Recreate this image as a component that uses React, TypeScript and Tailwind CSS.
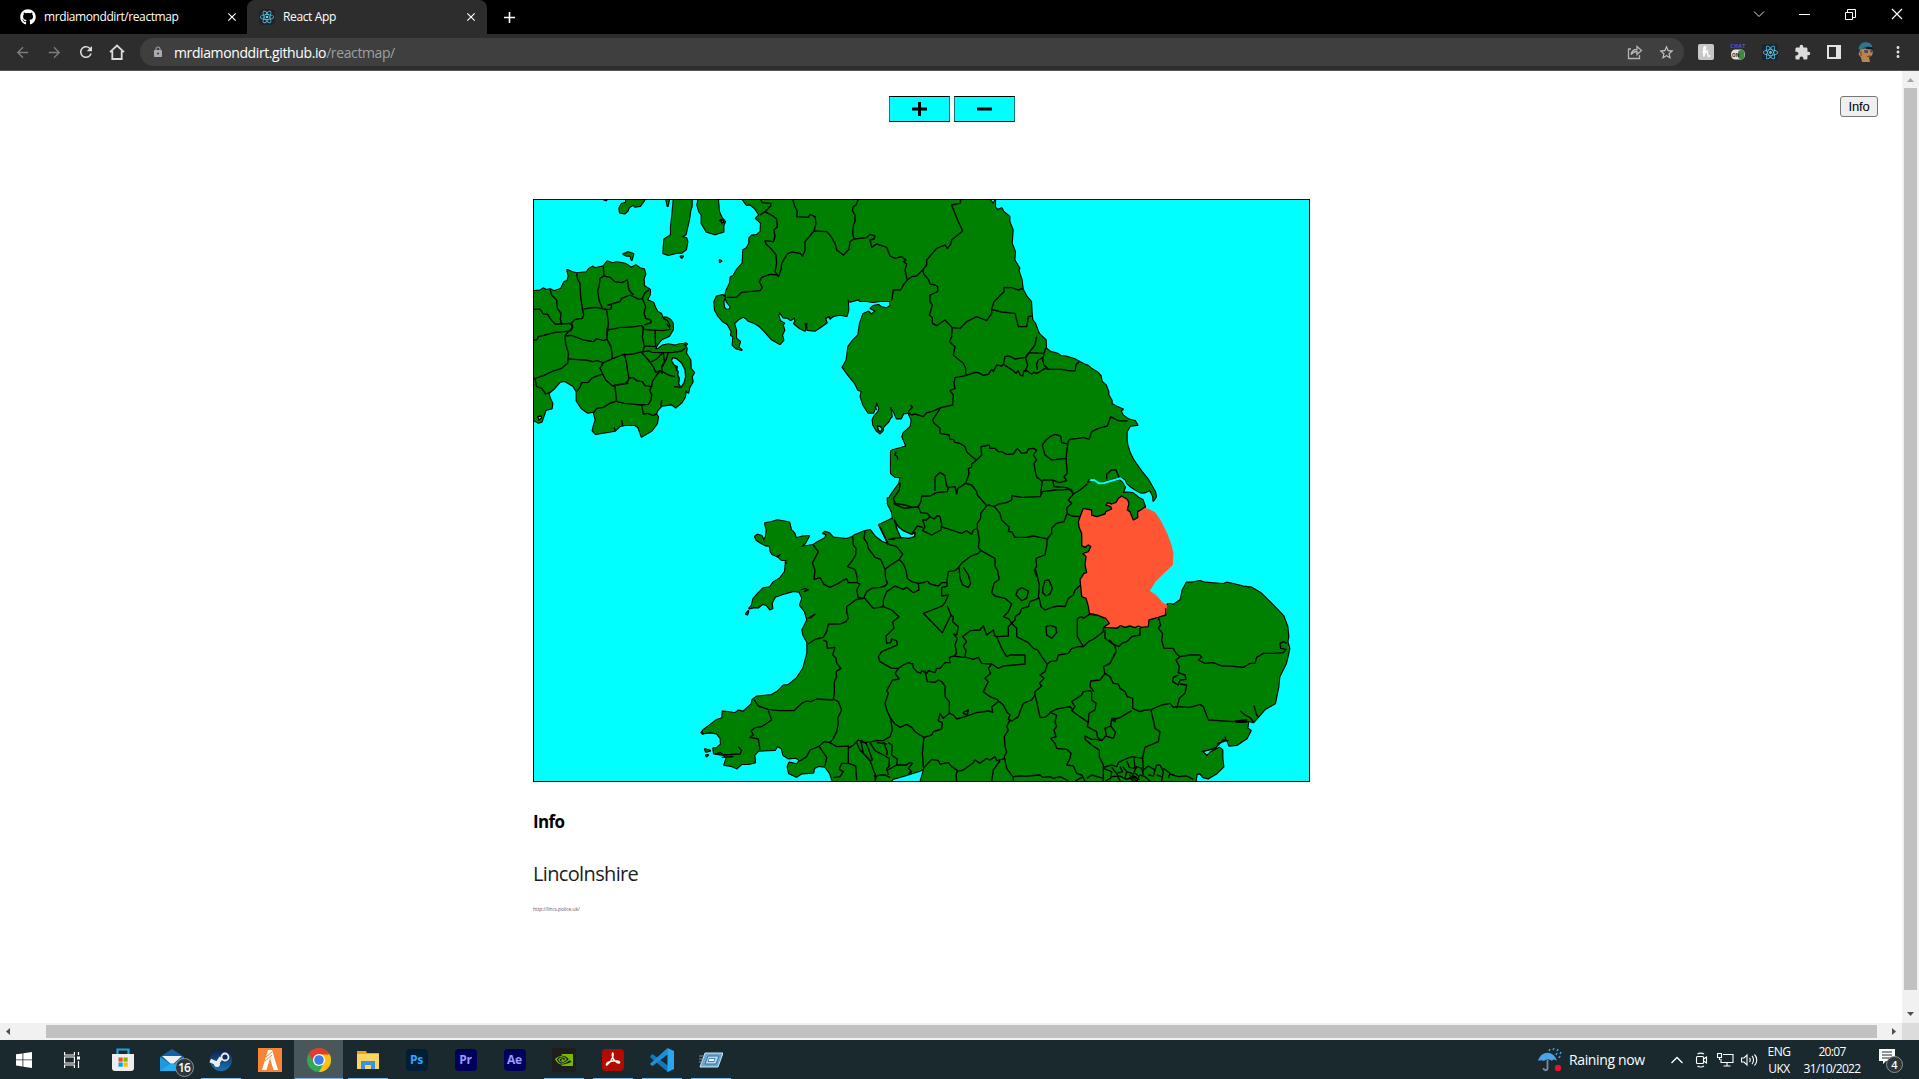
import React from "react";
import { FaGithub } from "react-icons/fa";
import { SiNvidia, SiReact } from "react-icons/si";
import { MdAdd, MdArrowBack, MdArrowForward, MdClose, MdExtension, MdLock, MdMoreVert, MdRefresh, MdStarBorder } from "react-icons/md";

type Sheet = { x: number; y: number; land: string[]; water?: string[]; coast: string[]; borders: string[] };

/* Each sheet is surveyed at three units per pixel from its own origin. */
const sheets: Sheet[] = [
  {
    x: 525, y: 190,
    land: [
      "M10,303L26,303 45,302 55,295 62,300 75,298 88,304 108,296 118,276 127,273 131,258 127,240 140,246 155,250 184,247 192,237 203,230 210,235 235,229 247,214 262,220 275,217 290,219 303,222 318,233 333,226 345,235 357,238 361,252 356,265 357,288 375,299 374,315 366,330 385,338 390,352 397,365 408,371 413,383 425,383 437,390 443,400 444,418 432,438 410,448 398,462 390,477 398,478 412,467 430,463 450,467 466,462 475,462 485,475 483,490 496,510 497,535 507,548 500,560 503,575 493,592 490,608 482,600 480,620 470,637 452,652 440,643 410,647 398,660 392,672 399,680 396,700 380,722 350,740 340,712 330,705 300,705 285,708 270,722 235,728 212,732 203,722 207,705 212,690 206,665 188,668 170,655 155,632 155,605 145,588 120,573 105,575 88,595 70,610 75,625 82,640 80,655 62,660 55,680 50,695 40,698 26,690 10,690Z",
      "M305,20L303,38 290,42 283,55 285,68 300,70 308,62 312,52 325,44 330,50 345,48 357,32 360,20Z",
      "M422,20L428,48 434,20Z",
      "M447,20L442,75 438,110 438,135 418,148 415,190 430,195 455,188 470,188 483,178 487,155 484,145 470,140 482,133 487,110 492,90 496,60 500,50 500,20Z",
      "M522,20L517,45 523,65 530,75 530,100 545,125 570,133 595,125 595,105 600,95 590,83 582,65 578,20Z",
      "M295,192L303,190 308,186 325,192 320,210 316,197 305,197Z",
      "M467,199L474,199 470,203Z", "M584,211L589,213 585,216Z", "M481,460L486,462 483,465Z", "M232,26L247,26 243,31Z",
    ],
    water: ["M443,503L455,506 469,518 480,538 482,560 477,579 468,592 461,582 463,565 458,555 460,545 455,540 457,530 448,526 439,512Z", "M38,680L48,678 50,684 42,690Z"],
    coast: ["M415,385L428,392 434,405 434,414 426,402"],
    borders: [
      "M75,298L80,315 95,330 97,355 108,370 106,388 110,402", "M26,358L45,357 55,372 68,373 75,385 90,402 110,402 135,400 143,410 138,422 125,424 90,427 60,435 40,440 35,450 26,450",
      "M155,250L158,268 165,280 167,320 172,355 176,375 172,385 150,388 140,398 143,412 120,436 122,460 130,490 128,520 110,535 80,545 60,555 26,567",
      "M176,357L200,353 215,352 240,358 258,358 260,342 248,345 285,335 290,325 315,315 342,328 352,325 360,308 372,300",
      "M235,229L237,258 225,265 222,290 218,300 222,330 232,355", "M237,258L255,262 270,275 290,278 307,270 312,300 325,315",
      "M240,355L246,365 250,400 246,440", "M246,420L270,416 285,412 305,412 330,410 350,406 356,418 385,420", "M352,325L362,350 357,370 362,385 378,390 378,398 358,405", "M358,418L410,422 437,418",
      "M356,410L352,440 358,470 352,488", "M390,420L392,470M358,468L390,470", "M120,438L140,436 175,450 205,455 215,446 235,452 246,448 258,470 262,500 258,510M246,415L246,450",
      "M128,507L150,508 180,510 205,515 215,512 235,518 258,508 290,495 325,492 352,485 375,483 380,487 415,488 445,487 470,483 480,475",
      "M235,518L225,535 232,550 242,570 262,587 300,580 308,575 312,563 308,545 305,520 298,490", "M350,487L370,510 385,530 392,547 405,542 412,550 410,530 418,515 415,487M412,490L395,507 375,517", "M430,487L425,505 412,530",
      "M312,565L325,563 335,572 352,575 360,587 380,590 382,575 395,555 405,543", "M412,545L430,555 450,560M447,590L468,592M452,530L455,540",
      "M230,553L210,560 200,565 190,577 170,578 165,592 155,605", "M262,587L270,590 275,633 255,640 235,652 215,655 206,668", "M275,585L310,580M275,635L300,640 330,643 350,645 370,643 378,630 380,615 374,600 380,590",
      "M350,645L355,672 368,670 385,677 397,670", "M30,565L35,590 50,595 62,612 75,607M410,630L408,647M290,690L293,708M268,712L270,722M583,90L592,98",
    ],
  },
  {
    x: 700, y: 190,
    land: [
      "M128,20L128,28 140,45 150,43 165,55 178,75 168,85 176,92 183,100 182,125 170,135 155,137 148,145 148,160 140,175 130,180 128,220 110,240 100,258 92,262 90,280 80,300 76,315 80,335 92,350 90,358 78,360 72,352 70,335 75,322 68,315 50,320 43,335 45,360 55,378 70,395 83,403 95,425 93,435 100,440 98,465 108,475 125,480 115,472 120,455 108,445 108,420 102,400 115,388 130,380 138,385 145,392 165,400 178,408 195,425 215,448 240,462 250,450 246,435 253,420 248,405 252,400 240,393 235,375 239,366 250,382 262,383 272,390 285,382 286,395 282,400 300,415 315,422 316,403 322,397 322,420 345,422 360,412 380,398 376,387 384,377 390,385 400,378 420,374 440,378 445,360 443,325 450,335 475,328 480,333 500,333 520,336 540,333 570,333 572,347 560,355 545,352 535,345 520,348 512,355 527,362 515,374 505,365 490,372 480,400 475,435 460,450 445,470 440,510 428,532 445,555 465,580 475,600 485,603 482,620 490,645 505,668 520,668 525,655 530,636 538,655 535,665 522,680 518,690 520,705 530,722 540,730 548,722 550,710 565,695 570,685 575,680 572,652 580,662 590,685 603,685 610,670 625,668 635,690 632,710 610,730 608,740 620,768 595,778 574,783 574,820 1020,820 1018,435 1005,400 997,390 995,370 993,335 980,320 968,298 965,270 955,240 958,235 943,210 945,185 935,160 938,120 928,95 928,80 910,65 905,55 893,60 885,52 885,32 880,42 868,28 868,20Z",
    ],
    water: ["M532,708L542,710 547,718 540,726 535,720Z", "M62,88L68,90 72,97 66,99Z"],
    coast: ["M632,645L637,652 625,665M572,652L575,665M376,385L388,380 392,388M525,650L530,660M315,400L320,415"],
    borders: [
      "M182,28L187,38 213,40 212,48 195,65 180,75", "M195,65L222,80 230,88 232,110 222,120 225,140 220,155 195,152 198,162 215,178 228,195 230,220 225,245 235,260 243,240 245,220 262,192 275,186 300,190 308,198 315,182 315,155 342,123 348,100 345,80 330,73 325,82 290,80 292,65 285,50 278,28",
      "M232,255L210,253 185,262 178,275 187,293 180,302 155,304 125,307 110,322 80,322",
      "M342,123L380,125 392,138 405,160 410,180 430,195 447,178 450,155 462,147 500,143 510,133 525,138 522,147 510,150 515,172 530,162 560,172 570,198 585,205 605,200 618,210 610,215 620,222 615,240 622,270 610,285 602,300 580,300 575,332",
      "M475,28L468,45 460,50 457,62 465,75 465,95 460,105 458,130 462,147", "M622,270L635,260 650,258 668,240 680,225 680,210 710,175 735,165 742,175 752,163 755,150 788,123 775,95 755,45 780,40 783,28",
      "M668,240L672,253 685,268 690,282 705,285 713,290 713,305 690,315 690,335 697,345 693,360 688,375 697,383 697,400 710,407 735,390 757,413 780,415 800,395 830,380 860,392 875,370 875,358 905,366 945,370 955,410 980,410 985,380 995,378",
      "M875,358L882,335 912,305 912,292 935,293 955,300 970,295", "M757,413L755,440 748,455 765,470 760,495 775,508 790,520 797,535 797,555",
    ],
  },
  {
    x: 840, y: 340,
    land: [
      "M585,-30L617,0 618,25 630,35 655,42 662,48 680,50 705,58 730,72 745,78 755,87 772,97 782,108 785,125 797,135 805,155 805,165 815,182 815,192 830,200 848,208 842,212 848,225 865,238 885,243 892,255 870,257 860,275 860,300 862,315 870,340 880,360 905,395 925,420 945,455 948,470 940,482 940,470 930,450 915,457 900,458 880,445 860,430 858,420 845,411 820,416 790,425 775,428 760,418 745,418 740,430 760,423 785,433 810,427 838,420 850,430 855,442 848,458 865,458 880,460 895,473 908,480 915,500 912,505 930,560 930,753 928,780 140,780 140,640 145,612 118,555 155,537 165,560 185,570 205,583 200,575 165,545 158,520 143,490 150,470 160,455 178,430 182,412 165,410 153,400 153,335 160,330 200,320 187,290 215,260 300,150Z",
    ],
    water: ["M163,540L175,560 190,572 215,583 225,577 224,590 205,595 182,592 172,570Z"],
    coast: [],
    borders: [
      "M377,107L405,97 415,98 430,106 445,103 455,88 460,95 470,75 485,78 490,73 505,82 520,92 528,100 535,92 540,105 548,108 552,92 560,92 575,103 582,97 590,100 600,95 615,85 625,88 665,88 685,92 705,93 708,75 717,65 710,72",
      "M490,73L495,50 508,48 525,57 555,52 567,38 585,15 590,-10", "M567,38L612,40 617,25M567,38L557,55 563,75 555,95M612,40L608,60 612,75 625,88M608,53L595,60 590,72 592,90",
      "M377,107L345,113 342,130 345,145 330,152 340,165 338,195 302,203 275,215 260,218 250,230 225,222 215,225 205,218", "M302,203L278,240 282,250 300,265 300,280 327,285 330,298 340,298 345,307 360,310 375,320 380,335 390,345 405,357 410,360 425,345 423,320 448,315 450,325 465,325 475,335 485,335 500,343 520,342 532,325 545,340 560,338 565,327 580,325 590,330 580,345 590,360 582,370 587,400 590,410 607,425 602,460",
      "M410,360L395,372 395,382 385,385 387,402 377,430 395,435 410,455 412,465 440,497", "M440,497L447,495 462,500 475,492 500,488 515,480 515,467 545,472 600,470 607,455 645,450 690,448 700,462",
      "M607,315L618,300 630,290 645,283 662,288 665,308 683,312 678,355 635,360 615,345Z", "M683,312L688,298 715,295 730,292 748,298 755,275 775,265 802,258 812,230 835,242 862,243", "M678,355L682,400 672,410 680,422 658,428 638,420 642,440 680,443 695,450 700,462 720,450 742,432M607,420L638,420",
      "M800,418L800,402 815,390 828,390 837,412", "M700,462L685,480 695,490 680,505 683,522 695,528 718,530",
      "M683,515L672,545 650,550 635,565 635,580 622,597 620,618 615,645 588,655 590,680 583,690 590,710", "M622,597L600,592 580,588 560,592 525,592 515,575 505,575 508,562 485,540 480,520 465,502",
      "M440,497L422,520 422,535 412,550 412,565 400,570 395,583 380,572 365,580 340,572 303,560", "M377,430L353,445 350,462 345,440 325,442 322,455 290,458 270,468 245,468 243,485 235,500 220,503 195,495 165,490 160,475 178,450 180,428",
      "M160,490L180,500 195,505 235,500 242,518 262,520 270,530 260,540 248,540 255,560 248,572 275,585 303,570 305,552 300,530 292,527 282,537 270,530M248,562L232,558 215,582",
      "M285,452L285,412 300,397 315,407 318,430 325,450", "M412,565L418,600 415,622 423,632", "M357,682L360,715 368,735 385,742 392,730 385,705 370,682",
      "M423,632L465,655 465,680 472,690 478,718", "M168,335L165,345 172,350 173,358", "M145,598L165,597M120,560L145,612",
    ],
  },
  {
    x: 690, y: 500,
    land: [
      "M593,-5L595,15 605,30 610,65 622,92 645,105 675,103 670,115 640,112 625,88 608,57 590,65 568,75 580,100 590,118 592,132 575,125 555,110 540,90 520,95 495,105 485,112 470,117 430,113 418,100 405,95 400,100 410,103 405,115 385,125 370,135 350,138 330,140 318,150 300,165 288,185 285,215 270,235 250,247 240,262 220,265 205,280 190,297 185,318 178,325 190,322 205,322 218,312 230,315 240,328 247,325 245,310 255,290 285,280 310,273 328,275 337,295 330,315 345,335 352,360 337,390 340,405 352,427 352,460 340,505 320,535 295,555 280,557 262,575 245,585 200,590 187,600 185,612 160,635 145,632 135,640 115,636 98,635 97,655 80,660 60,675 40,690 38,700 60,697 80,700 92,715 93,733 80,745 70,745 72,760 100,765 110,773 103,795 125,798 140,805 155,792 175,792 195,787 193,765 205,752 255,750 262,738 275,745 280,765 295,775 318,773 330,782 320,793 298,788 293,800 297,820 320,830 335,820 370,818 372,805 385,798 405,800 420,820 430,850 600,850 608,837 640,828 690,812 703,805 690,850 920,850 920,-5Z",
      "M225,70L245,66 262,61 280,64 298,68 303,90 313,100 318,115 335,110 357,108 345,130 318,150 300,168 290,180 275,180 265,170 248,163 242,155 240,138 228,135 222,120 228,110 230,90Z", "M195,110L203,104 215,108 220,120 230,137 215,130 200,120Z", "M168,342L175,333 172,343Z", "M45,748L60,752 48,755Z", "M48,766L54,765 50,769Z",
    ],
    water: [],
    coast: ["M332,270L345,265 355,270 342,275M353,355L375,343 360,355M75,762L92,758 100,765 150,762 155,752 145,740M95,772L130,770M262,170L272,163M605,115L640,113M38,690L33,698 40,703M285,185L290,192M398,98L404,103"],
    borders: [
      "M370,135L385,155 367,190 375,210 372,238 390,233 402,253 420,262 445,250 460,240 470,237 475,248 500,248 510,252 500,270 505,293 522,295",
      "M488,108L490,135 498,145 497,165 485,185 472,200 495,208 500,225 503,245", "M525,93L522,115 532,130 535,145 555,172 572,178 585,208 587,235 592,250 585,258 570,262 545,265 530,275 522,292 535,308 550,325 580,320 605,330 627,350 608,365 612,385 588,408 590,430 602,428 605,417 620,422 622,435 610,440 575,455 565,470 570,485 605,505 625,505 640,495 655,488 668,492 670,503 680,515 692,520 695,512 710,520 715,512 735,518 740,505 750,505 765,488 780,488 778,472 792,468",
      "M592,132L620,140 638,162 628,178 605,193 585,208", "M628,178L640,192 648,210 652,235 665,245 685,250 687,270 670,278 650,262 640,268 615,258 590,275 580,300 580,320", "M685,250L700,248 712,243 720,252 745,258 755,248 770,248 775,215 795,212 805,203 815,190 840,170 865,160 872,152",
      "M770,245L772,258 755,263 755,288 775,285 765,308 757,318 700,340 757,398 783,345 772,318",
      "M522,295L500,298 490,305 470,320 470,335 475,355 468,365 450,372 415,372 410,395 400,412 375,418 355,432", "M400,420L410,425 412,445 435,442 428,465 438,475 440,490 453,505 438,515 440,530 433,545 433,580 430,597 445,605 455,630 443,655 445,670 440,695 430,715 420,728 402,725 385,740 360,750 350,770 330,783",
      "M193,600L205,618 235,628 265,632 312,632 335,610 350,603 362,605 380,597 430,600", "M235,632L245,660 215,680 195,683 183,692 190,705 180,712 205,717 210,750", "M420,728L440,740 475,738 475,790 455,790 448,808 460,815 450,830 430,833",
      "M475,745L490,735 505,720 520,728 545,725 560,722 580,722 600,710 607,690 602,655 592,635 585,610 595,580 590,572 608,540 628,537 615,520 625,505", "M388,740L410,772 405,798M475,790L497,798 500,840M500,728L510,750 540,780 550,810 558,828 555,843M512,720L528,730 535,745 547,780 540,783 520,760 512,720",
      "M540,728L555,752 580,765 598,775 597,800 590,805 595,825M580,725L592,755 590,765M595,728L606,735 605,765 622,778 620,795M560,728L590,732", "M590,812L620,795 650,795 658,788 668,790 655,805 665,815 655,822M553,832L568,825 585,825 600,832M552,825L558,838",
      "M602,655L615,672 630,682 650,673 665,682 675,695 690,705 702,712 697,760 698,770 700,800", "M705,512L712,545 735,547 745,540 755,545 765,558 765,590 778,605 778,640 760,655 750,640 745,663 757,668 755,687 730,695 725,705 702,712", "M778,640L790,645 800,657",
      "M700,805L725,778 745,782 750,792 775,788 785,800 803,812 798,825 800,843",
    ],
  },
  {
    x: 940, y: 520,
    land: ["M-10,-10L600,-10 600,265 660,268 678,262 683,253 692,252 700,255 722,240 728,210 740,188 755,188 780,183 795,188 850,192 860,188 880,192 910,200 935,203 960,218 975,232 1005,262 1030,288 1042,320 1045,350 1042,365 1048,385 1045,400 1038,430 1028,450 1018,470 1015,500 1005,550 975,567 955,590 940,607 925,602 922,625 932,632 920,655 890,675 868,677 862,662 850,656 840,668 828,680 800,690 785,693 800,708 815,695 838,683 847,690 847,715 850,740 830,760 805,775 790,772 780,760 770,762 765,795 -10,795Z"],
    water: ["M885,603L920,600 918,607 890,607Z"],
    coast: ["M900,572L915,585 930,593 940,605M942,557L950,585 955,590M880,605L928,605M785,695L830,685M830,672L858,662 855,650M845,660L866,662M795,700L802,708"],
    borders: [
      "M178,178L162,190 155,218 165,228 195,235 215,252 205,275 190,290 207,297 215,310", "M285,145L290,160 298,195 295,235 270,245 265,260 245,265 240,280 225,290 225,300 215,310", "M297,232L303,260 315,270 335,262 355,258 375,260 385,235 400,225 405,210 422,195",
      "M228,225L232,212 245,203 265,213 260,235 245,242Z", "M308,205L315,182 327,180 337,205 330,222 318,228 308,218Z", "M318,320L330,316 348,322 350,338 335,355 320,345Z",
      "M215,310L230,325 230,350 265,368 280,385 293,390 305,410 322,433", "M215,310L205,320 205,348 175,350 165,348 160,330 140,345 130,317 120,330 90,332 68,350 80,365 70,378 78,392 75,410",
      "M170,350L185,385 200,410 210,405 255,405 255,432 225,435 190,438 175,445 155,432 125,430 115,412 100,418 80,412 68,412 42,408M33,287L40,290 38,305 55,320 50,345 40,342 52,355 45,375 50,400 42,408",
      "M322,433L330,425 350,422 355,405 385,400 395,385 415,380 430,380 445,365 460,358 490,335 490,325 508,310", "M412,295L412,350 430,380M412,295L425,290 430,295 448,283 470,285 495,295", "M495,328L495,355 515,370 537,380 545,370 560,365 575,350 600,345 600,320",
      "M507,358L525,378 528,395 510,430 490,440 495,460", "M655,292L662,315 655,325 668,340 665,360 672,385 700,385 708,400 720,410 750,405 780,405 785,412 775,420 795,430 820,428 845,438 870,438 910,442 930,430 945,430 950,412 970,400 1000,400 1030,398 1038,388 1022,385 1020,370 1030,365 1040,370",
      "M720,410L708,420 718,440 715,458 735,465 738,478 720,480 715,495 698,485 700,472 715,465M720,492L740,495 735,520 718,535 710,565", "M712,560L700,562 690,550 665,555 635,568 615,570 600,575 578,565 578,535 562,530 555,515 540,505 535,492 520,490 510,470 495,460 480,480 452,483 450,500 462,515",
      "M322,433L315,455 300,465 312,475 298,490 305,498 285,515 285,525 290,545 300,592 315,592 330,580", "M452,512L430,515 425,525 395,545 405,560 395,572 420,590 445,607 447,580 465,570 468,550 455,540 455,515Z",
      "M400,572L390,560 350,567 330,577 350,585 345,605 350,620 342,630 348,650 332,655 345,670 350,685 380,688 393,700 390,715 380,735 400,738 410,760 425,765 435,783",
      "M445,605L442,620 470,635 472,650 485,662 470,658 455,658 435,648 435,658 455,675 470,685 478,690 478,710 490,735 490,783", "M485,662L497,648 520,655 527,637 512,618 495,625 500,650M512,618L515,595 527,595 525,605 515,600 540,593 575,572",
      "M632,568L640,600 645,625 660,635 655,665 615,682 608,712 610,755", "M490,742L515,735 530,740 535,728 550,720 575,710 608,715", "M712,560L750,562 780,553 790,560 805,600 880,605",
      "M155,432L145,445 152,460 135,475 145,485 130,515 150,530 170,538 190,555 200,575 210,585 205,598 215,603 235,590 240,575 250,550 275,540 285,525", "M175,545L155,560 158,577 145,573 110,578 75,590 50,597",
      "M210,600L200,620 205,630 193,650 195,680 200,695 193,710 200,745 218,770M50,755L70,750 100,728 105,720 120,730 140,715 150,720 165,710 170,722 195,715M180,722L160,750 155,783",
      "M220,783L220,770 240,768 260,768 300,765 308,772 330,770 340,775 360,770 385,782M405,783L430,770M440,775L455,765 490,775",
      "M490,745L515,755 512,775 495,783M515,742L530,760 548,755 540,740M530,760L540,783M548,740L560,755 555,775M560,722L568,742 585,745 582,715M560,755L580,762 590,740 605,745 610,765M515,770L540,768 560,778 580,770 600,780M568,765L590,783 600,765 615,770 630,783M610,750L625,738 645,750 640,768 625,765M645,750L650,735 660,735 670,755 665,783M670,745L690,760 685,775M690,762L715,770 740,768 760,778M575,765L590,772M585,760L598,770M570,775L582,782M650,765L665,770",
      "M70,577L85,570 82,583 72,582Z",
    ],
  },
];

/* Lincolnshire, the selected county, drawn on the third sheet's grid. */
const selected = {
  fill: "M730,505L755,510 755,525 770,530 795,522 797,515 815,507 812,500 797,495 803,488 815,492 828,487 835,475 845,468 862,478 867,490 862,510 870,515 880,540 893,533 893,515 905,508 912,505 925,508 945,518 960,540 980,580 993,615 999,640 997,675 965,705 945,725 928,753 950,768 968,790 980,795 977,825 955,832 927,840 925,860 905,862 870,858 830,860 795,862 805,850 795,835 770,825 748,820 745,800 738,775 725,770 722,740 720,720 732,700 740,698 735,645 727,638 745,635 752,622 748,617 735,620 725,617 725,580 720,560 715,545 722,525Z",
  edge: "M977,805L977,825 955,832 927,840 925,860M925,860L905,862 895,858 885,863 870,858 855,862 842,857 830,865 795,862 793,860 808,850 797,835 770,825 748,820 745,800 738,775 725,770 722,740 720,718 732,700 740,698 735,675 738,650 728,640 745,635 752,620 745,615 735,622 725,617 725,580 717,562 715,545 722,525 730,505 755,510 755,525 770,530 795,522 797,515 815,507 812,500 797,495 803,488 815,492 828,487 835,475 845,468 862,478 867,490 862,510 870,515 880,540 893,533 893,515 905,508 915,500",
};

const at = (s: { x: number; y: number }) => `translate(${s.x} ${s.y}) scale(.333333)`;

function CountyMap() {
  return (
    <svg viewBox="534 200 775 581" className="h-[583px] w-[777px] border border-black bg-[#00ffff]" strokeLinejoin="round">
      {/* Coast outline first, then the land over its inner half. */}
      <g fill="#000" stroke="#000" strokeWidth="6.500">
        {sheets.map((s, i) => <g key={i} transform={at(s)}>{s.land.map((d, j) => <path key={j} d={d} />)}</g>)}
      </g>
      <g fill="#008000">
        {sheets.map((s, i) => <g key={i} transform={at(s)}>{s.land.map((d, j) => <path key={j} d={d} />)}</g>)}
      </g>
      {/* The Wash and the North Sea off Lincolnshire have no coast outline. */}
      <g fill="#00ffff">
        <path transform={at(sheets[4])} d="M600,-30L655,-15 662,5 680,40 720,60 720,140 665,180 652,205 650,222 668,245 678,258 640,260 600,200Z" />
        <path transform={at(sheets[2])} d="M919,503L945,516 960,540 1000,600 1000,490 960,488 940,492Z" />
      </g>
      {sheets.map((s, i) => (
        <g key={i} transform={at(s)} stroke="#000" strokeWidth="4">
          <g fill="#00ffff">{s.water?.map((d, j) => <path key={j} d={d} />)}</g>
          <g fill="none">{[...s.borders, ...s.coast].map((d, j) => <path key={j} d={d} />)}</g>
        </g>
      ))}
      <g transform={at(sheets[2])}>
        {/* Humber */}
        <path d="M750,421L762,420 778,430 792,429 820,421 842,415 851,423 858,436 870,447 885,456 905,466" fill="none" stroke="#00ffff" strokeWidth="6" />
        <path d={selected.fill} fill="#ff5533" stroke="#ff5533" strokeWidth="3" />
        <path d={selected.edge} fill="none" stroke="#000" strokeWidth="4" />
      </g>
    </svg>
  );
}

function Tabs() {
  return (
    <div className="flex h-[34px] items-start justify-between bg-black text-white">
      <div className="flex h-[34px] items-center text-[12px]">
        <div className="flex h-full w-[247px] items-center pl-[20px]">
          <FaGithub size={16} />
          <span className="ml-2 w-[181px] tracking-[-0.41px]">mrdiamonddirt/reactmap</span>
          <MdClose size={14} />
        </div>
        <div className="flex h-full w-[240px] items-center rounded-t-lg bg-[#2d2d2d] pl-[12px]">
          <span className="grid size-4 place-items-center rounded-sm bg-[#20232a]"><SiReact size={14} className="text-[#61dafb]" /></span>
          <span className="ml-2 w-[181px] tracking-[-0.36px]">React App</span>
          <MdClose size={14} />
        </div>
        <MdAdd size={19} className="ml-[13px]" />
      </div>
      <div className="flex h-[28px] items-center">
        <svg className="mr-[34px] size-[12px]" viewBox="0 0 12 12" fill="none" stroke="#ddd"><path d="M1 3.500l5 5 5-5" /></svg>
        <svg className="mr-[35px] size-[11px]" viewBox="0 0 11 11" stroke="white"><path d="M0 5.500h11" /></svg>
        <svg className="mr-[35px] size-[11px]" viewBox="0 0 11 11" fill="none" stroke="white"><path d="M.5 3.500h7v7h-7zM2.500 3V.5h8v8H8" /></svg>
        <svg className="mr-[16px] size-[12px]" viewBox="0 0 12 12" stroke="white" strokeWidth="1.200"><path d="M1 1l10 10M11 1L1 11" /></svg>
      </div>
    </div>
  );
}

function Toolbar() {
  return (
    <div className="flex h-[37px] shrink-0 items-center border-b border-[#555354] bg-[#2d2d2d] text-[#dcdcdc]">
      <div className="flex w-[140px] shrink-0 items-center gap-[15px] pl-[14px]">
        <MdArrowBack size={17} className="shrink-0 text-[#7d7d7d]" />
        <MdArrowForward size={17} className="shrink-0 text-[#7d7d7d]" />
        <MdRefresh size={18} className="-mx-px shrink-0" />
        <svg className="size-4 shrink-0" viewBox="0 0 16 16" fill="none" stroke="currentColor" strokeWidth="1.800"><path d="M1 8.200L8 1.500l7 6.700M3.300 7v8h9.400V7" /></svg>
      </div>
      <div className="flex h-[28px] w-[1544px] shrink-0 items-center rounded-full bg-[#3f3f3f] pr-[9px] pl-[12px]">
        <MdLock size={12} className="text-[#a8abb0]" />
        <span className="ml-[10px] flex-1 text-[14px] tracking-[-0.39px] text-white">mrdiamonddirt.github.io<span className="text-[#9aa0a6]">/reactmap/</span></span>
        <svg className="mr-[15px] size-4" viewBox="0 0 16 16" fill="none" stroke="#b5b5b5" strokeWidth="1.300"><path d="M4 5H1.500v9.500h11V11M4 10.500c.5-3.500 3-5 6-5V2.500l4.500 4-4.500 4v-3c-3 0-4.500 1-6 3z" /></svg>
        <MdStarBorder size={17} className="text-[#c4c4c4]" />
      </div>
      <div className="ml-[14px] flex items-center gap-4">
        <svg className="size-4" viewBox="0 0 16 16"><rect width="16" height="16" rx="2" fill="#c6c6c6" /><path d="M5 8c2-1 3.500-5 2-5.500S5.500 6 5.800 12.500C6.500 9 8.500 7 9.300 8s0 4.500 1.200 4.500S12 12 12 11M4 8.500l6-2" fill="none" stroke="white" strokeWidth="1.300" /></svg>
        <span className="flex size-4 flex-col items-center justify-center">
          <span className="text-[5px] leading-[5px] font-bold tracking-[0.5px] text-[#6a4fd0]">CHAT</span>
          <svg className="h-[12px] w-[16px]" viewBox="0 0 16 12"><rect x=".5" y=".5" width="15" height="11" rx="4.500" fill="#e2e2e2" /><rect x="8" y="1" width="7" height="10" rx="3.500" fill="#3d8b40" /><text x="1.500" y="8.200" fontSize="5" fontWeight="700" fill="#222">ON</text></svg>
        </span>
        <span className="grid size-4 place-items-center bg-[#20232a]"><SiReact size={15} className="text-[#5ad3f5]" /></span>
        <MdExtension size={17} className="-mx-[0.5px]" />
        <svg className="size-4" viewBox="0 0 16 16"><path fill="#e2e2e2" fillRule="evenodd" d="M1 1h14v14H1zM3 3h7v10H3z" /></svg>
        <svg className="h-5 w-4" viewBox="0 0 16 20"><path d="M2.500 7l10.500-1 2 5-1.500 3-2.500 1 1 5H4l-1-4.500-2.500-3z" fill="#b98352" /><path d="M.5 7C1.500 1 6-.5 10 .5c3 .8 4.500 3 4.500 5l-7-.5-5 3z" fill="#2c7593" /><path d="M9 4.500l6 1-.5 2L8 7z" fill="#12181f" /><path d="M6 8h4v3H6.500zM12 8h3l-.7 2.500h-2z" fill="#4b4f58" /><path d="M9 14.500l4-.5M3 9v5" stroke="#6b4024" /></svg>
        <MdMoreVert size={18} className="-mx-px" />
      </div>
    </div>
  );
}

function ZoomButton({ sign }: { sign: "plus" | "minus" }) {
  return (
    <button className="grid h-[26px] w-[61px] place-items-center border border-black border-x-[#1a7777] bg-[#00ffff]">
      <svg className="h-[14px] w-[15px]" viewBox="0 0 15 14"><path d="M0 5.500h15v3H0z" />{sign === "plus" && <path d="M6 0h3v14H6z" />}</svg>
    </button>
  );
}

function Page() {
  return (
    <div className="flex h-[969px] shrink-0 bg-white text-black">
      <div className="flex w-[1902px] flex-col">
        <main className="flex h-[952px] flex-col">
          <div className="flex h-[128px] justify-between pt-[25px]">
            <div className="w-[889px]" />
            <div className="flex gap-[4px]"><ZoomButton sign="plus" /><ZoomButton sign="minus" /></div>
            <div className="flex w-[887px] justify-end pr-[24px]">
              <button className="h-[21px] w-[38px] rounded-[3px] border border-[#767676] bg-[#efefef] font-['Liberation_Sans'] text-[13px] leading-[19px] tracking-[-0.2px]">Info</button>
            </div>
          </div>
          <div className="flex flex-col pl-[533px]">
            <CountyMap />
            <h3 className="mt-[28px] text-[17px] leading-[24px] font-bold tracking-[-0.6px]">Info</h3>
            <p className="mt-[26px] text-[20px] leading-[28px] tracking-[-0.65px] text-[#1c1c1c]">Lincolnshire</p>
            <a className="mt-[17px] text-[5px] leading-[8px] tracking-[-0.1px] text-[#6b5470]">http://lincs.police.uk/</a>
          </div>
        </main>
        <div className="flex h-[17px] items-center justify-between bg-[#f1f1f1] pr-[6px] pl-[6px]">
          <svg className="h-[7px] w-[4px]" viewBox="0 0 4 7"><path d="M4 0v7L0 3.500z" fill="#505050" /></svg>
          <div className="ml-[36px] h-[13px] w-[1831px] bg-[#c1c1c1]" />
          <svg className="ml-auto h-[7px] w-[4px]" viewBox="0 0 4 7"><path d="M0 0v7l4-3.500z" fill="#505050" /></svg>
        </div>
      </div>
      <div className="flex w-[17px] flex-col items-center bg-[#f1f1f1] pt-[7px]">
        <svg className="h-[4px] w-[7px]" viewBox="0 0 7 4"><path d="M0 4h7L3.500 0z" fill="#a3a3a3" /></svg>
        <div className="mt-[6px] h-[902px] w-[13px] bg-[#c1c1c1]" />
        <svg className="mt-[22px] h-[4px] w-[7px] shrink-0" viewBox="0 0 7 4"><path d="M0 0h7L3.500 4z" fill="#505050" /></svg>
        <div className="mt-auto h-[17px] w-[17px] bg-[#dcdcdc]" />
      </div>
    </div>
  );
}

function Slot({ children, open, active }: { children: React.ReactNode; open?: boolean; active?: boolean }) {
  return (
    <div className={`flex h-full w-[49px] flex-col items-center ${active ? "bg-[#4a575a]" : ""}`}>
      <div className="flex h-[38px] items-center pt-px">{children}</div>
      {open && <div className={`h-px bg-[#76b9ed] ${active ? "w-[48px]" : "w-[40px]"}`} />}
    </div>
  );
}

function Adobe({ label, box }: { label: string; box: string }) {
  return <span className={`grid size-[22px] place-items-center rounded-[4px] text-[12px] font-bold tracking-[-0.3px] ${box}`}>{label}</span>;
}

function Taskbar() {
  return (
    <div className="flex h-[39px] shrink-0 items-center bg-[#1a292e] text-white">
      <Slot><svg className="-ml-px size-4" viewBox="0 0 16 16" fill="white"><path d="M0 2.300l6.500-.9v6.100H0zM7.300 1.300L16 0v7.500H7.300zM0 8.300h6.500v6.200L0 13.600zM7.300 8.300H16V16l-8.700-1.300z" /></svg></Slot>
      <Slot><svg className="-ml-[3px] size-4" viewBox="0 0 16 16" fill="none" stroke="white" strokeWidth="1.200"><path d="M.6 0v3h9.800V0M.6 5h9.800v6H.6zM.6 16v-3h9.800v3M14.500 0v3M14.500 9v7" /><path d="M13 4.500h3v3h-3z" fill="white" stroke="none" /></svg></Slot>
      <Slot><svg className="h-[24px] w-[24px]" viewBox="0 0 24 24"><path d="M6.500 7V1.500h11V7" fill="none" stroke="#1fa6e0" strokeWidth="2.200" /><path d="M1 6h22v14a3 3 0 01-3 3H4a3 3 0 01-3-3z" fill="#eeeeee" /><path d="M7.500 9.500h4.200v4.200H7.500z" fill="#f25022" /><path d="M12.500 9.500h4.200v4.200h-4.200z" fill="#7fba00" /><path d="M7.500 14.500h4.200v4.200H7.500z" fill="#00a4ef" /><path d="M12.500 14.500h4.200v4.200h-4.200z" fill="#ffb900" /></svg></Slot>
      <Slot>
        <span className="relative block h-[24px] w-[24px]">
          <svg className="size-6" viewBox="0 0 24 24"><path d="M0 9L12 1l12 8v6H0z" fill="#1363a8" /><path d="M2 8h20l-10 9z" fill="#f0f0f0" /><path d="M0 9l12 8 12-8v14H0z" fill="#1d9be0" /><path d="M0 23l12-8 12 8z" fill="#28aef0" /></svg>
          <span className="absolute top-[10px] left-[15px] grid size-[19px] place-items-center rounded-full border border-[#8b9295] bg-[#2c373b] text-[12px] font-semibold tracking-[-0.8px]">16</span>
        </span>
      </Slot>
      <Slot open><svg className="size-6" viewBox="0 0 24 24"><defs><linearGradient id="steam" x2="0" y2="1"><stop stopColor="#111d4a" /><stop offset="1" stopColor="#1475b5" /></linearGradient></defs><circle cx="12" cy="12" r="11" fill="url(#steam)" /><path d="M1.200 12.500l7 3 4-6" stroke="#eee" strokeWidth="4" fill="none" /><circle cx="8" cy="16" r="3" fill="#eee" /><circle cx="16" cy="9" r="3.500" fill="#13285b" stroke="#eee" strokeWidth="1.800" /></svg></Slot>
      <Slot><svg className="size-6" viewBox="0 0 24 24"><path d="M0 0h24v24H0z" fill="#f98337" /><path d="M10 2h4l6 20h-4.500L12 10 8.500 22H4z" fill="#fff" /><path d="M8 9l6-5M7 13l7-6" stroke="#f98337" /></svg></Slot>
      <Slot open active><svg className="size-6" viewBox="0 0 24 24"><circle cx="12" cy="12" r="12" fill="#34a853" /><path d="M1.600 6A12 12 0 0122.400 6L23 7H12l-5 7z" fill="#e33b2e" /><path d="M12 6.500h10.700A12 12 0 0112 24l5-9z" fill="#fbc116" /><circle cx="12" cy="12" r="6" fill="#fff" /><circle cx="12" cy="12" r="4.800" fill="#3b7de9" /></svg></Slot>
      <Slot open><svg className="size-6" viewBox="0 0 24 24"><path d="M1 3h9l1 2h12v16H1z" fill="#e9a512" /><path d="M1 6h22v15H1z" fill="#fcd462" /><path d="M5 21v-8h14v8h-4v-4H9v4z" fill="#3a93dc" /></svg></Slot>
      <Slot><Adobe label="Ps" box="bg-[#001e36] text-[#31a8ff]" /></Slot>
      <Slot><Adobe label="Pr" box="bg-[#00005b] text-[#9999ff]" /></Slot>
      <Slot><Adobe label="Ae" box="bg-[#00005b] text-[#9999ff]" /></Slot>
      <Slot open><span className="grid size-6 place-items-center bg-[#1e1e1e]"><SiNvidia size={18} className="text-[#76b900]" /></span></Slot>
      <Slot open><svg className="size-[22px]" viewBox="0 0 22 22"><rect width="22" height="22" rx="4" fill="#b30b00" /><path d="M10.500 4c2 0 0 8-5.500 12-1 .5-1-1.500 1-2.500 3-1.500 8-2 11-1 1.500 1 0 2.200-2 1C12 12 9 7 10.500 4z" fill="none" stroke="#fff" strokeWidth="1.400" /></svg></Slot>
      <Slot open><svg className="size-6" viewBox="0 0 24 24"><path d="M.3 8L2.500 6 18 17.800V24L.3 9.500z" fill="#1178bd" /><path d="M17.500 0L.3 15.500v1L2.500 18 18 6.200z" fill="#1e8fd5" /><path d="M17.500 0L24 3v18l-6.500 3z" fill="#2aa7f0" /></svg></Slot>
      <Slot open><svg className="size-6" viewBox="0 0 24 24"><path d="M6 5h18l-5 14H1z" fill="#6ba7d0" stroke="#d3e6f2" /><path d="M9 8h11l-3 8H6z" fill="#b9d7ec" stroke="#2f76ac" /><path d="M10 10.500h6l-1 3H9z" fill="#fff" stroke="#4386b4" /><path d="M0 8h5M0 11h4M0 14h3" stroke="#7d97a5" /></svg></Slot>

      <div className="ml-auto flex items-center text-[14px]">
        <svg className="mr-px h-[25px] w-[26px]" viewBox="0 0 26 25"><path d="M1 14C4 3 17 3 20 14c-2-2-4-2-5 0-2-2-6-2-8 0-2-1-4-1-6 0z" fill="#4ba3ea" /><path d="M10.500 13v8c0 3-4 3-4 0" fill="none" stroke="#7c8c98" strokeWidth="1.800" /><path d="M13 2l-1 2M17 1l-1 2M21 2l-1 2M20 6l-1 2M24 5l-1 2M23 9l-1 2" stroke="#3fa0ed" strokeWidth="1.500" /><circle cx="21" cy="21" r="3.200" fill="#e3142d" /></svg>
        <span className="ml-[5px] w-[79px] tracking-[-0.37px] whitespace-nowrap">Raining now</span>
        <svg className="ml-[23px] h-[8px] w-[12px]" viewBox="0 0 12 8" fill="none" stroke="white" strokeWidth="1.300"><path d="M.5 7L6 1.500 11.500 7" /></svg>
        <svg className="ml-[12px] h-[16px] w-[13px]" viewBox="0 0 13 16" fill="none" stroke="white" strokeWidth="1.100"><rect x="1.500" y="4.500" width="7" height="7" rx="1" /><path d="M8.500 7l3-2v6l-3-2M2.500 2.200C4 .8 7.500.8 9 2.200M2.500 14c1.500 1.300 5 1.300 6.500 0" /></svg>
        <svg className="ml-[9px] h-[14px] w-[17px]" viewBox="0 0 17 14" fill="none" stroke="white" strokeWidth="1.100"><path d="M6 1.500h10v8H4V6M10 9.500V13M6.500 13h7M.5.500h4v4h-4zM2.500 4.500V7" /></svg>
        <svg className="ml-[7px] h-[14px] w-[17px]" viewBox="0 0 17 14" fill="none" stroke="white" strokeWidth="1.100"><path d="M.5 5v4H3l3 3V2L3 5zM8.500 5c1 1 1 3 0 4M11 3c2 2 2 6 0 8M13.500 1.500c3 3 3 8 0 11" /></svg>
        <div className="ml-[8px] flex w-[26px] flex-col items-center text-[12px] leading-[17px] tracking-[-0.5px]"><span>ENG</span><span>UKX</span></div>
        <div className="ml-[8px] flex w-[64px] flex-col items-center text-[12px] leading-[17px] tracking-[-0.67px]"><span>20:07</span><span>31/10/2022</span></div>
        <span className="relative mr-[16px] ml-[15px] block h-[24px] w-[24px]">
          <svg className="size-4" viewBox="0 0 16 16"><path d="M0 1h16v12h-9l-3 3v-3H0z" fill="white" /><path d="M3 4h10M3 7h10M3 10h10" stroke="#1a292e" /></svg>
          <span className="absolute top-[8px] left-[7px] grid size-[17px] place-items-center rounded-full border border-[#8b9295] bg-[#2c373b] text-[11px] font-semibold">4</span>
        </span>
      </div>
    </div>
  );
}

export default function App() {
  return (
    <div className="flex h-[1079px] w-[1919px] flex-col overflow-hidden font-['Open_Sans','Noto_Sans',sans-serif]">
      <Tabs />
      <Toolbar />
      <Page />
      <Taskbar />
    </div>
  );
}
